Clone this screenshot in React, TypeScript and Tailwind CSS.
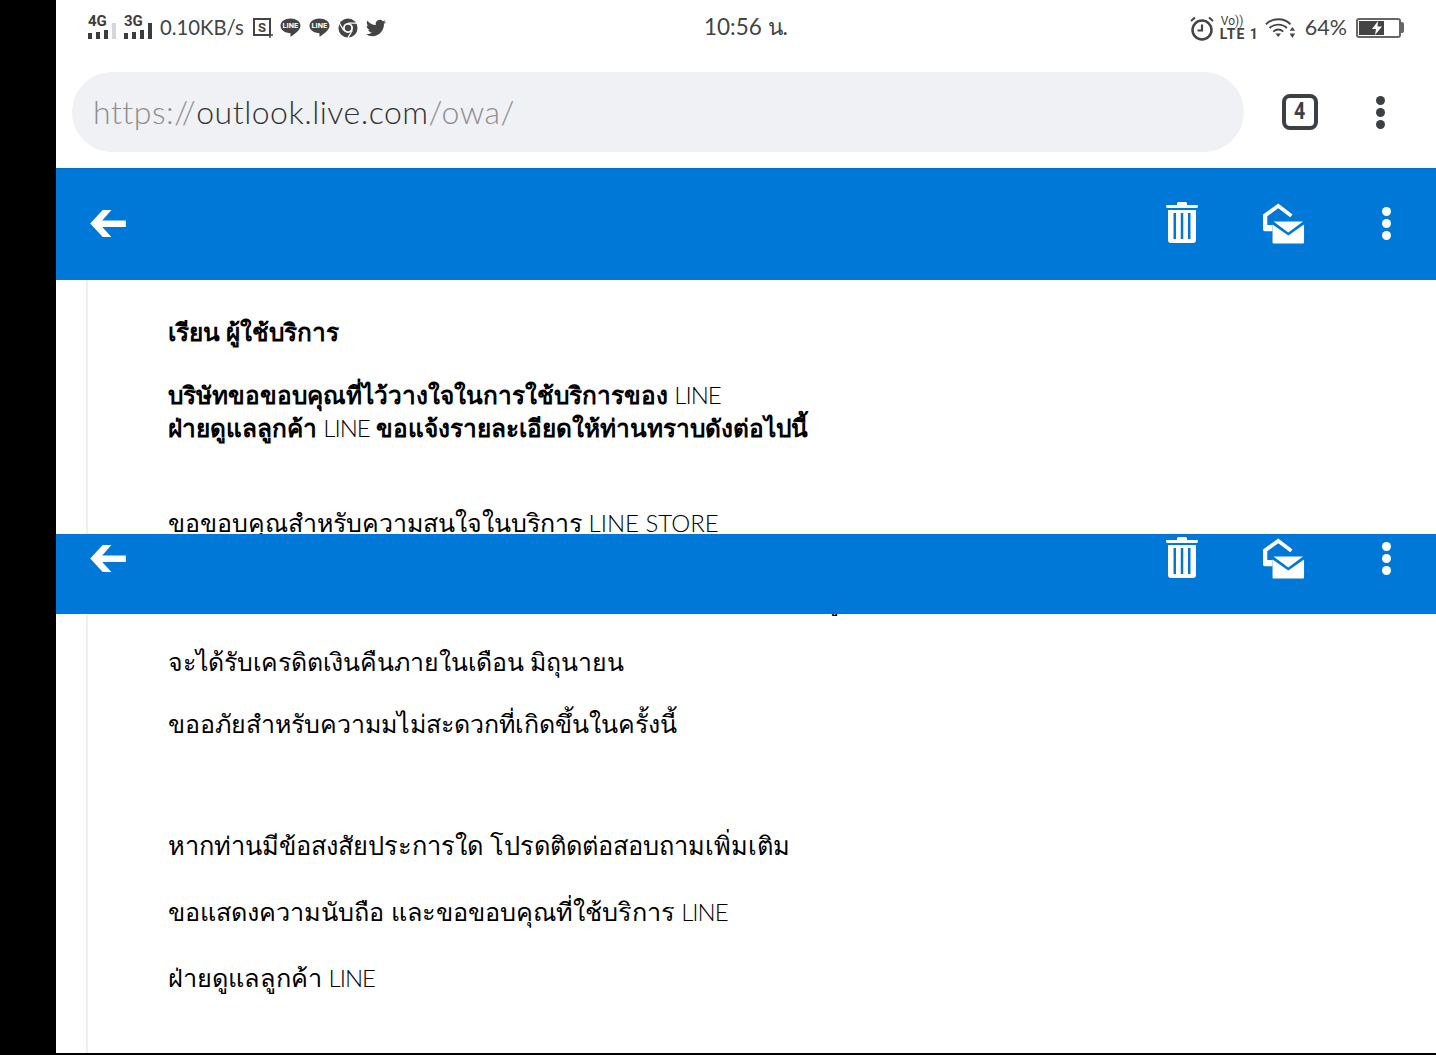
import React from "react";

const latin = "font-['Lato','Noto_Sans',sans-serif]";

function Signal({ label, dim }: { label: string; dim?: boolean }) {
  return (
    <div className="relative w-[28px] h-[26px]">
      <span className="absolute left-0 top-[-1px] text-[15px] leading-[15px] font-bold text-[#3c3c3c] font-['Roboto',sans-serif]">{label}</span>
      <svg width="28" height="26" viewBox="0 0 28 26" className="absolute left-0 top-0">
        <rect x="0" y="18" width="4" height="6" fill="#3c3c3c" />
        <rect x="8" y="17" width="4" height="7" fill="#3c3c3c" />
        <rect x="16" y="15" width="4" height="9" fill="#3c3c3c" />
        <rect x="24" y="8" width="4" height="16" fill={dim ? "#d6d6d6" : "#3c3c3c"} />
      </svg>
    </div>
  );
}

function LineBubble() {
  return (
    <div className="relative w-[21px] h-[19px] shrink-0">
      <svg width="21" height="19" viewBox="0 0 21 19" className="absolute inset-0">
        <path d="M10.5 0.5C16 0.5 20.5 3.4 20.5 7.8C20.5 12 15 16 11 18.5C10.5 18.8 10.3 18.3 10.4 17.6L10.5 15.2C5 15.2 0.5 12.2 0.5 7.8C0.5 3.4 5 0.5 10.5 0.5Z" fill="#444" />
      </svg>
      <span className="absolute inset-x-0 top-[3px] text-center text-[7.5px] leading-[9px] font-bold text-white font-['Roboto',sans-serif]">LINE</span>
    </div>
  );
}

function Trash() {
  return (
    <svg width="32" height="42" viewBox="0 0 32 42" fill="#fff">
      <path d="M11 1.5C11 .7 11.7 0 12.5 0h7c.8 0 1.5.7 1.5 1.5V3h10c.6 0 1 .5 1 1s-.4 2-1 2H1C.4 6 0 4.500 0 4s.4-1 1-1h10z" />
      <path fillRule="evenodd" d="M2 8h28v30c0 2-1 3-3 3H5c-2 0-3-1-3-3V8zm5.500 3v26h2.500V11H7.500zm7.250 0v26h2.500V11h-2.500zm7.250 0v26h2.500V11H22z" />
    </svg>
  );
}

function MailOpen() {
  return (
    <svg width="42" height="41" viewBox="0 0 44 42" fill="#fff">
      <path d="M16 0L31 11.500L28.500 14.500L16 5L4.500 13.500V22.500H10V29H2C.8 29 0 28.200 0 27V11.500L16 0Z" />
      <path d="M11 19H42L26.500 30.500L11 19Z" />
      <path d="M10 22L26.500 33.500L43 22V41C43 41.600 42.600 42 42 42H11C10.400 42 10 41.600 10 41V22Z" />
    </svg>
  );
}

function Dots({ color }: { color: string }) {
  return (
    <svg width="9" height="33" viewBox="0 0 9 33" fill={color}>
      <circle cx="4.500" cy="4.500" r="4.500" />
      <circle cx="4.500" cy="16.500" r="4.500" />
      <circle cx="4.500" cy="28.500" r="4.500" />
    </svg>
  );
}

function Back() {
  return (
    <svg width="37" height="27" viewBox="0 0 38 28" fill="#fff">
      <path d="M13 0H22L12.500 11H37V17.500H12.500L22 28H13L0 14Z" />
    </svg>
  );
}

function BarIcons() {
  return (
    <>
      <div className="ml-[34px] flex"><Back /></div>
      <div className="ml-auto w-[32px] flex"><Trash /></div>
      <div className="ml-[65px] flex"><MailOpen /></div>
      <div className="ml-[77px] mr-[45px] flex"><Dots color="#fff" /></div>
    </>
  );
}

function Latin({ children, wide }: { children: React.ReactNode; wide?: boolean }) {
  return (
    <span className={wide
      ? "font-['Lato',sans-serif] font-light text-[24px] leading-[20px] tracking-[0px]"
      : "font-['Lato',sans-serif] font-light text-[24px] leading-[20px] tracking-[-1px]"}>
      {children}
    </span>
  );
}

export default function App() {
  return (
    <div className="relative w-[1436px] h-[1055px] overflow-hidden bg-black flex font-['Noto_Sans','DejaVu_Sans',sans-serif]">
      <div className="w-[56px] shrink-0 bg-black" />
      <div className="flex-1 flex flex-col bg-white min-w-0 mb-[2px]">
        {/* status bar */}
        <div className="h-[56px] shrink-0 flex items-center relative">
          <div className="ml-[32px] flex items-center mt-[-1px]">
            <Signal label="4G" dim />
            <div className="ml-[8px]"><Signal label="3G" /></div>
            <span className={`ml-[8px] text-[20.3px] leading-none font-normal text-[#444] ${latin}`}>0.10KB/s</span>
            <svg width="21" height="21" viewBox="0 0 21 21" className="ml-[8px]" fill="none" stroke="#444" strokeWidth="2">
              <rect x="2" y="2" width="16" height="16" />
              <path d="M18 18H21M18 18V21" strokeWidth="1.500" />
              <text x="10" y="15" fontSize="13" fontWeight="700" fill="#444" stroke="none" textAnchor="middle" fontFamily="Roboto">S</text>
            </svg>
            <div className="ml-[7px]"><LineBubble /></div>
            <div className="ml-[8px]"><LineBubble /></div>
            <svg width="20" height="20" viewBox="0 0 24 24" className="ml-[8px]">
              <circle cx="12" cy="12" r="11.500" fill="#444" />
              <circle cx="12" cy="12" r="6" fill="#fff" />
              <circle cx="12" cy="12" r="3.800" fill="#444" />
              <path d="M12 6H23M6.800 15L1.500 6M17.200 15L12 23.500" stroke="#fff" strokeWidth="1.500" />
            </svg>
            <svg width="22" height="20" viewBox="0 0 24 24" className="ml-[7px]" fill="#444">
              <path d="M23.950 4.570a10 10 0 0 1-2.820.775 4.960 4.960 0 0 0 2.160-2.720c-.950.555-2 .959-3.127 1.184a4.920 4.920 0 0 0-8.384 4.482C7.690 8.095 4.067 6.130 1.640 3.162a4.820 4.820 0 0 0-.666 2.475c0 1.710.870 3.213 2.188 4.096a4.900 4.900 0 0 1-2.228-.616v.060a4.923 4.923 0 0 0 3.946 4.827 5 5 0 0 1-2.212.085 4.940 4.940 0 0 0 4.604 3.417 9.870 9.870 0 0 1-6.102 2.105c-.390 0-.779-.023-1.170-.067a13.995 13.995 0 0 0 7.557 2.209c9.054 0 13.999-7.496 13.999-13.986 0-.209 0-.420-.015-.630a9.936 9.936 0 0 0 2.460-2.548z" />
            </svg>
          </div>
          <span className={`absolute left-[648px] top-[14px] text-[22.5px] leading-[26px] font-normal text-[#444] ${latin}`}>10:56 น.</span>
          <div className="ml-auto mr-[32px] flex items-center mt-[-1px]">
            <svg width="26" height="26" viewBox="0 0 26 26" fill="none" stroke="#444" strokeWidth="2.500">
              <circle cx="13" cy="15" r="9.500" />
              <path d="M13 9.500V15.500H8.500" strokeWidth="2.200" />
              <path d="M2 6L6 2.500M24 6L20 2.500" strokeWidth="2" />
            </svg>
            <div className="ml-[5px] w-[36px] flex flex-col text-[#444] font-['Roboto',sans-serif] whitespace-nowrap">
              <span className="text-[12px] leading-[12px] pl-[1px]">Vo))</span>
              <span className="text-[14px] leading-[14px] font-bold tracking-[1px]">LTE 1</span>
            </div>
            <svg width="31" height="22" viewBox="0 0 34 24" fill="none" stroke="#444" strokeWidth="2" className="ml-[9px]">
              <path d="M1 8C8 0.500 21 0.500 28 8" />
              <path d="M5 12C10 7 19 7 24 12" />
              <path d="M9 16C12.500 13 16.500 13 20 16" />
              <path d="M11.500 18H17.500L14.500 22Z" fill="#444" stroke="none" />
              <path d="M30 11L33 15H27ZM30 23L33 18H27Z" fill="#444" stroke="none" />
            </svg>
            <span className={`ml-[9px] text-[21.5px] leading-none font-normal text-[#444] ${latin}`}>64%</span>
            <div className="ml-[9px] flex items-center">
              <div className="relative w-[45px] h-[20px] rounded-[3px] border-2 border-[#666] p-[1px] flex">
                <div className="w-[25px] h-full bg-[#444]" />
                <svg width="12" height="14" viewBox="0 0 12 14" className="absolute left-[13px] top-[1px]" fill="#fff">
                  <path d="M7 0L1 8H5L4 14L11 5.500H6.500Z" />
                </svg>
              </div>
              <div className="w-[3px] h-[11px] bg-[#666] rounded-r-[2px]" />
            </div>
          </div>
        </div>

        {/* url row */}
        <div className="mt-[16px] h-[80px] shrink-0 flex items-center">
          <div className={`ml-[16px] w-[1172px] h-[80px] rounded-[40px] bg-[#eff1f4] flex items-center pl-[21px] text-[32px] tracking-[0.5px] font-light text-[#8e8e8e] ${latin}`}>
            <span>https://</span><span className="text-[#333]">outlook.live.com</span><span>/owa/</span>
          </div>
          <div className="ml-[38px] w-[36px] h-[36px] rounded-[8px] border-[4px] border-[#3c4043] flex items-center justify-center text-[23px] font-bold text-[#3c4043] font-['Roboto',sans-serif]">
            <span className="scale-x-[.85]">4</span>
          </div>
          <div className="ml-[58px] flex"><Dots color="#3c4043" /></div>
        </div>

        {/* blue header */}
        <div className="mt-[16px] h-[112px] shrink-0 bg-[#0078d7] border-t border-[#0070c8] flex items-center pb-[3px]">
          <BarIcons />
        </div>

        {/* message */}
        <div className="flex-1 min-h-0 ml-[30px] border-l-2 border-[#f0f0f0] pl-[80px] text-[25px] leading-[33px] text-black overflow-hidden">
          <p className="mt-[35px] font-bold text-[24.4px]">เรียน ผู้ใช้บริการ</p>
          <p className="mt-[30px] font-bold text-[24.4px]">บริษัทขอขอบคุณที่ไว้วางใจในการใช้บริการของ <Latin>LINE</Latin></p>
          <p className="font-bold text-[24.4px]">ฝ่ายดูแลลูกค้า <Latin>LINE</Latin> ขอแจ้งรายละเอียดให้ท่านทราบดังต่อไปนี้</p>
          <p className="mt-[62px]">ขอขอบคุณสำหรับความสนใจในบริการ <Latin wide>LINE STORE</Latin></p>
          <p className="mt-[44px] tracking-[-0.15px]">ทางบริษัทได้ดำเนินการคืนยอดเงินให้กับท่านเรียบร้อยแล้ว โดยผู้ใช้บริการ</p>
          <p className="mt-[29px] text-[24.85px]">จะได้รับเครดิตเงินคืนภายในเดือน มิถุนายน</p>
          <p className="mt-[29px]">ขออภัยสำหรับความมไม่สะดวกที่เกิดขึ้นในครั้งนี้</p>
          <p className="mt-[89px] text-[25.4px]">หากท่านมีข้อสงสัยประการใด โปรดติดต่อสอบถามเพิ่มเติม</p>
          <p className="mt-[33px] text-[25.25px]">ขอแสดงความนับถือ และขอขอบคุณที่ใช้บริการ <Latin>LINE</Latin></p>
          <p className="mt-[33px] text-[25.3px]">ฝ่ายดูแลลูกค้า <Latin>LINE</Latin></p>
        </div>
      </div>

      {/* floating duplicate header */}
      <div className="absolute left-[56px] right-0 top-[534px] h-[80px] bg-[#0078d7] flex items-start pt-[3px]">
        <div className="flex items-center w-full"><BarIcons /></div>
      </div>
    </div>
  );
}
